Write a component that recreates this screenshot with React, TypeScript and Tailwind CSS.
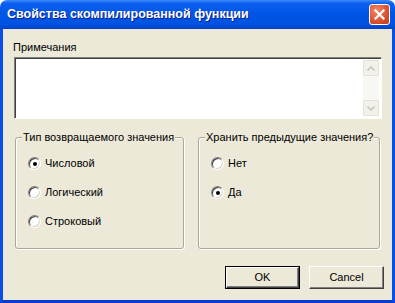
import React from "react";

const FONT = "font-['Liberation_Sans',Arial,sans-serif]";

function Radio({ label, checked }: { label: string; checked?: boolean }) {
  return (
    <div className="flex h-[13px] items-center gap-[4px]">
      <div className="flex h-[13px] w-[13px] items-center justify-center rounded-full border border-b-white border-l-[#808080] border-r-white border-t-[#808080] bg-white shadow-[inset_1px_1px_0_#404040,inset_-1px_-1px_0_#d4d0c8]">
        {checked && <div className="h-[4px] w-[4px] rounded-full bg-black" />}
      </div>
      <span className="text-[11px] leading-[13px] text-black">{label}</span>
    </div>
  );
}

function Group({
  title,
  width,
  children,
}: {
  title: string;
  width: string;
  children: React.ReactNode;
}) {
  return (
    <div
      className={`relative h-[112px] rounded-[3px] border border-[#aca899] shadow-[inset_1px_1px_0_#fff,1px_1px_0_#fff] pl-[12px] pt-[19px] ${width}`}
    >
      <span className="absolute left-[6px] top-[-7px] bg-[#ece9d8] px-[1px] text-[11px] leading-[13px] text-black">
        {title}
      </span>
      <div className="flex flex-col gap-[16px]">{children}</div>
    </div>
  );
}

function XpButton({ label, isDefault }: { label: string; isDefault?: boolean }) {
  return (
    <div
      className={`flex h-[23px] w-[75px] ${isDefault ? "border border-black" : ""}`}
    >
      <div className="flex flex-1 items-center justify-center border border-b-[#404040] border-l-white border-r-[#404040] border-t-white bg-[#ece9d8] shadow-[inset_-1px_-1px_0_#808080] text-[11px] text-black">
        {label}
      </div>
    </div>
  );
}

export default function App() {
  return (
    <div className={`h-[303px] w-[395px] bg-white ${FONT}`}>
      {/* title bar */}
      <div className="flex h-[29px] items-center justify-between rounded-t-[7px] bg-[linear-gradient(#3d8cf7_0%,#0a5ff0_12%,#0055e5_50%,#0053e1_85%,#0040c8_100%)] pl-[7px] pr-[5px]">
        <span className="text-[12.5px] font-bold text-white [text-shadow:1px_1px_#0f1d8c]">
          Свойства скомпилированной функции
        </span>
        <div className="flex h-[21px] w-[21px] items-center justify-center rounded-[3px] border border-white bg-[radial-gradient(circle_at_35%_30%,#ee8a6c,#d9512e_60%,#c23c1a)]">
          <svg width="11" height="11" viewBox="0 0 11 11">
            <path d="M1.5 1.5 L9.5 9.5 M9.5 1.5 L1.5 9.5" stroke="white" strokeWidth="2.2" strokeLinecap="square" />
          </svg>
        </div>
      </div>

      {/* client */}
      <div className="flex h-[274px] flex-col border-x-[3px] border-b-[3px] border-x-[#0a4ee8] border-b-[#0a3cd0] bg-[#ece9d8] pt-[12px]">
        <div className="pl-[10px] text-[11px] leading-[13px] text-black">Примечания</div>
        <div className="ml-[11px] mt-[3px] flex h-[62px] w-[368px] border border-b-white border-l-[#808080] border-r-white border-t-[#808080] bg-white shadow-[inset_1px_1px_0_#404040]">
          <div className="flex-1" />
          <div className="my-[2px] mr-[2px] flex w-[16px] flex-col justify-between bg-[#f7f7f3]">
            <div className="flex h-[16px] items-center justify-center rounded-[2px] border border-[#e3e2d8] bg-[#f2f1ea]">
              <svg width="8" height="5" viewBox="0 0 8 5">
                <path d="M0.5 4.5 L4 1 L7.5 4.5" stroke="#c9c7ba" strokeWidth="1.6" fill="none" />
              </svg>
            </div>
            <div className="flex h-[16px] items-center justify-center rounded-[2px] border border-[#e3e2d8] bg-[#f2f1ea]">
              <svg width="8" height="5" viewBox="0 0 8 5">
                <path d="M0.5 0.5 L4 4 L7.5 0.5" stroke="#c9c7ba" strokeWidth="1.6" fill="none" />
              </svg>
            </div>
          </div>
        </div>

        <div className="ml-[12px] mt-[18px] flex gap-[14px]">
          <Group title="Тип возвращаемого значения" width="w-[169px]">
            <Radio label="Числовой" checked />
            <Radio label="Логический" />
            <Radio label="Строковый" />
          </Group>
          <Group title="Хранить предыдущие значения?" width="w-[182px]">
            <Radio label="Нет" />
            <Radio label="Да" checked />
          </Group>
        </div>

        <div className="mr-[8px] mt-[17px] flex justify-end gap-[9px]">
          <XpButton label="OK" isDefault />
          <XpButton label="Cancel" />
        </div>
      </div>
    </div>
  );
}
